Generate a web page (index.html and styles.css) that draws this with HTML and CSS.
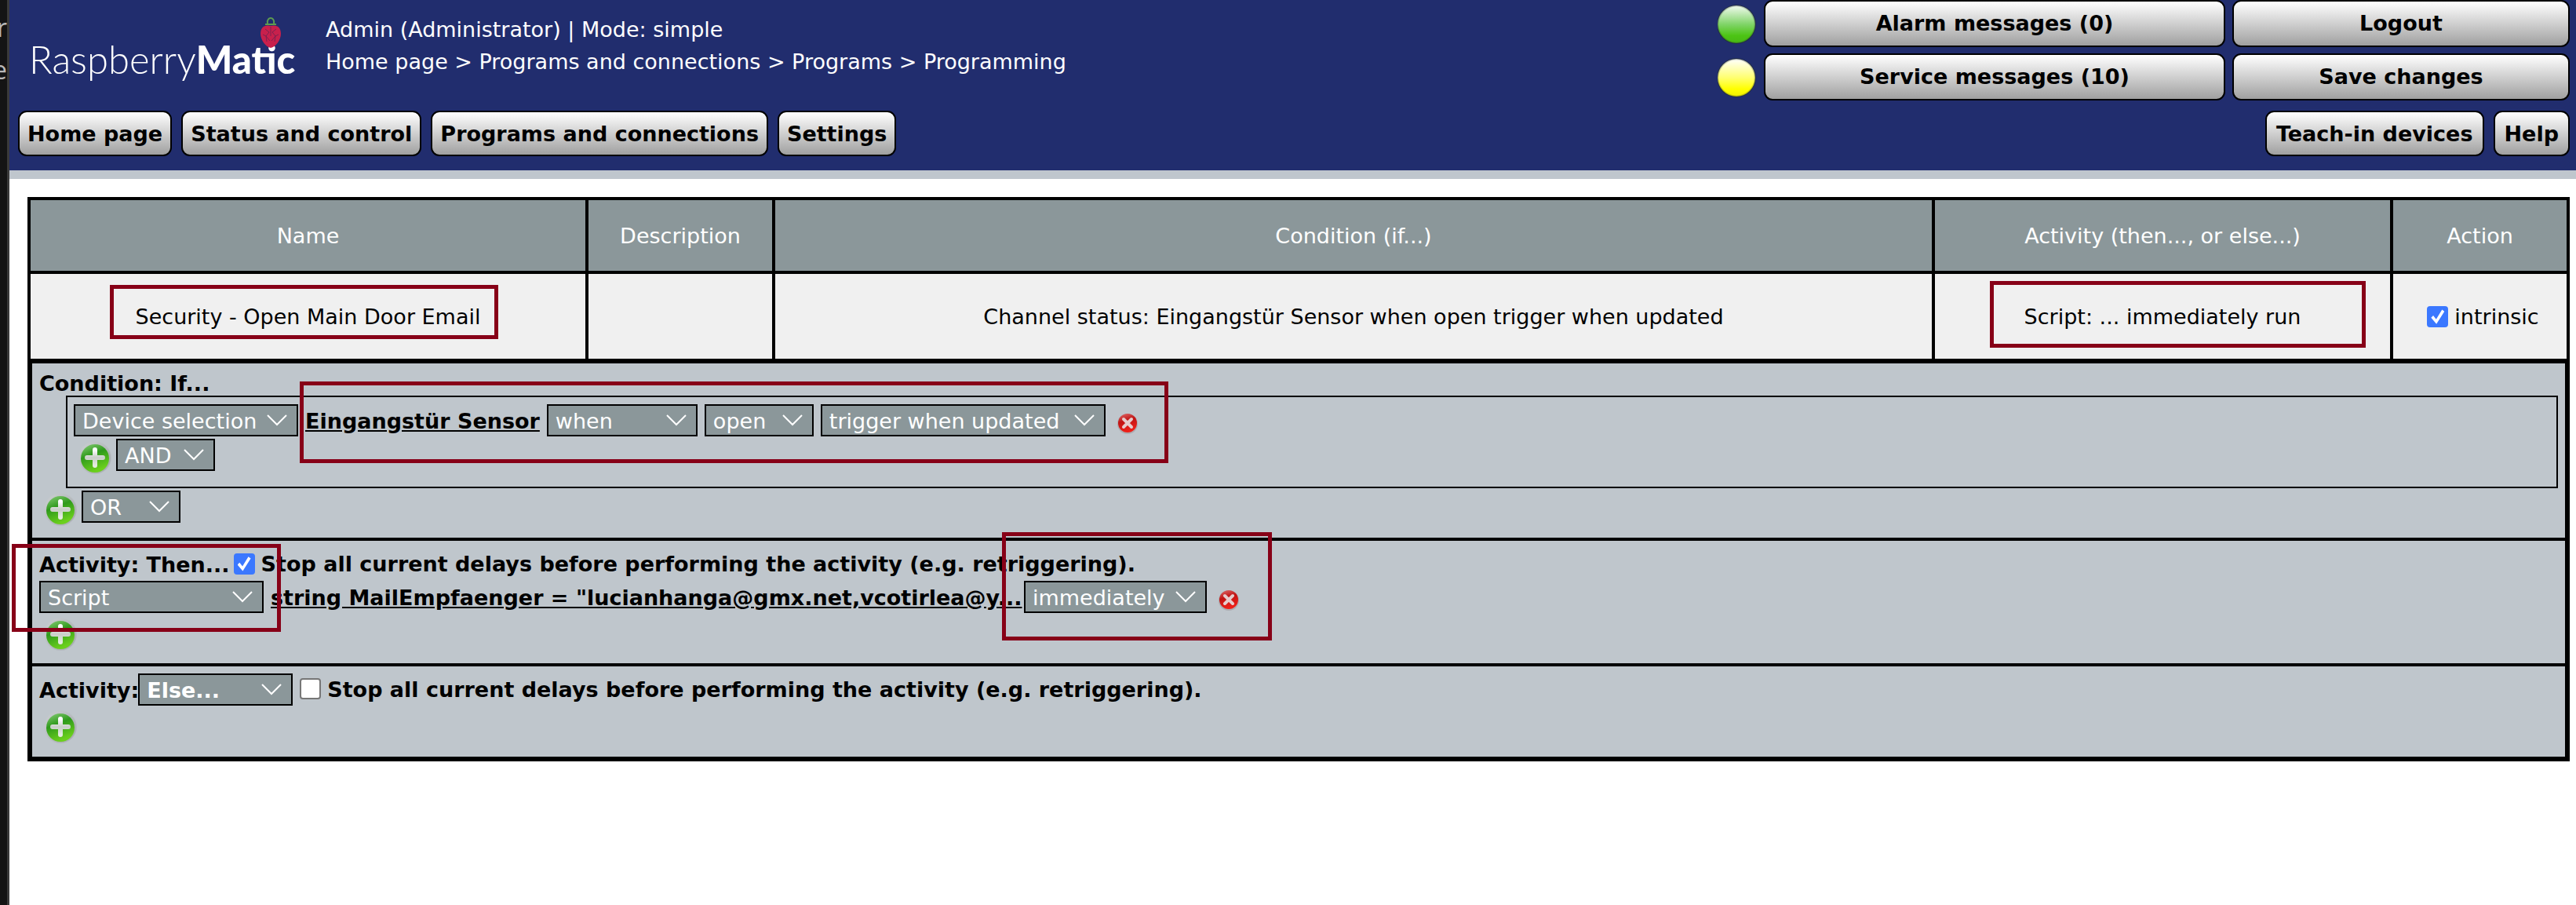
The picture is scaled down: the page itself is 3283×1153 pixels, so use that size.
FILE: index.html
```html
<!DOCTYPE html>
<html lang="en">
<head>
<meta charset="utf-8">
<title>RaspberryMatic</title>
<link rel="stylesheet" href="styles.css">
</head>
<body>
<svg class="defs" aria-hidden="true">
  <defs>
    <linearGradient id="green-fill" x1="0" y1="0" x2="0.4" y2="1"><stop offset="0" stop-color="#8ccf7c"/><stop offset="0.45" stop-color="#2f9a1c"/><stop offset="1" stop-color="#6bd01c"/></linearGradient>
    <linearGradient id="ring-fill" x1="0" y1="0" x2="1" y2="1"><stop offset="0" stop-color="#ccd0d3"/><stop offset="1" stop-color="#a0a5a8"/></linearGradient>
    <linearGradient id="plus-fill" x1="0" y1="0" x2="0" y2="1"><stop offset="0" stop-color="#ffffff"/><stop offset="0.5" stop-color="#c8cec8"/><stop offset="1" stop-color="#e4ece0"/></linearGradient>
    <linearGradient id="red-fill" x1="0" y1="0" x2="0.3" y2="1"><stop offset="0" stop-color="#e07070"/><stop offset="0.45" stop-color="#c01414"/><stop offset="1" stop-color="#ee2018"/></linearGradient>
    <linearGradient id="led-green" x1="0" y1="0" x2="0" y2="1"><stop offset="0" stop-color="#f2faf0"/><stop offset="0.5" stop-color="#80d468"/><stop offset="0.8" stop-color="#4cc414"/><stop offset="1" stop-color="#48b814"/></linearGradient>
    <linearGradient id="led-yellow" x1="0" y1="0" x2="0" y2="1"><stop offset="0" stop-color="#ffffff"/><stop offset="0.5" stop-color="#ffff70"/><stop offset="0.8" stop-color="#ffff00"/><stop offset="1" stop-color="#f0f000"/></linearGradient>
    <radialGradient id="led-shade"><stop offset="0.88" stop-color="#202a20" stop-opacity="0"/><stop offset="1" stop-color="#202a20" stop-opacity="0.6"/></radialGradient>
    <symbol id="add" viewBox="0 0 44 44">
      <circle cx="22" cy="22" r="21" fill="url(#ring-fill)" opacity="0.5"/>
      <circle cx="22" cy="22" r="20" fill="url(#ring-fill)"/>
      <circle cx="22" cy="23" r="18" fill="url(#green-fill)"/>
      <path d="M22 12V32M12 22H32" stroke="url(#plus-fill)" stroke-width="6" stroke-linecap="round"/>
    </symbol>
    <symbol id="remove" viewBox="0 0 32 32">
      <circle cx="16" cy="17" r="13" fill="#8a7a7e" opacity="0.35"/>
      <circle cx="16" cy="16" r="12" fill="url(#red-fill)"/>
      <path d="M11 11L21 21M21 11L11 21" stroke="#e6cccc" stroke-width="4" stroke-linecap="round"/>
    </symbol>
    <symbol id="chevron" viewBox="0 0 26 15"><path d="M1 1L13 13L25 1" fill="none" stroke="#fff" stroke-width="2"/></symbol>
  </defs>
</svg>

<div class="window">
  <aside class="edge" aria-hidden="true"><p>r</p><p>e</p></aside>
  <div class="page">
    <header class="header">
      <div class="top">
        <a class="logo" href="#"><span class="thin">Raspberry</span><b>Matic</b>
          <svg class="berry" viewBox="0 0 28 40"><path d="M7 9H21M10 8C9 3 12 1 14 1S19 3 18 8" fill="none" stroke="#5d9c50" stroke-width="2"/><path d="M14 11C22 9 27 13 27 21C27 29 20 38 14 39C8 38 1 29 1 21C1 13 6 9 14 11Z" fill="#c8204c"/><path d="M7 15L12 19L8 24L13 30M21 15L16 19L20 24L15 30M14 12V24M4 22L8 24L9 31M24 22L20 24L19 31" fill="none" stroke="#7d2050" stroke-width="1"/></svg>
        </a>
        <div class="info">
          <p>Admin (Administrator) | Mode: simple</p>
          <p>Home page &gt; Programs and connections &gt; Programs &gt; Programming</p>
        </div>
        <div class="status">
          <svg class="led" viewBox="0 0 50 52"><circle cx="24" cy="27" r="24" fill="url(#led-green)"/><circle cx="24" cy="27" r="25" fill="url(#led-shade)"/></svg>
          <button class="btn" type="button">Alarm messages (0)</button>
          <button class="btn" type="button">Logout</button>
          <svg class="led" viewBox="0 0 50 52"><circle cx="24" cy="27" r="24" fill="url(#led-yellow)"/><circle cx="24" cy="27" r="25" fill="url(#led-shade)"/></svg>
          <button class="btn" type="button">Service messages (10)</button>
          <button class="btn" type="button">Save changes</button>
        </div>
      </div>
      <nav class="menu">
        <button class="btn" type="button">Home page</button>
        <button class="btn" type="button">Status and control</button>
        <button class="btn" type="button">Programs and connections</button>
        <button class="btn" type="button">Settings</button>
        <span class="spacer"></span>
        <button class="btn" type="button">Teach-in devices</button>
        <button class="btn" type="button">Help</button>
      </nav>
    </header>

    <main class="program">
      <table class="summary">
        <colgroup><col class="c-name"><col class="c-desc"><col><col class="c-act"><col class="c-action"></colgroup>
        <thead><tr><th>Name</th><th>Description</th><th>Condition (if...)</th><th>Activity (then..., or else...)</th><th>Action</th></tr></thead>
        <tbody><tr>
          <td>Security - Open Main Door Email</td><td></td>
          <td>Channel status: Eingangstür Sensor when open trigger when updated</td>
          <td>Script: ... immediately run</td>
          <td><label class="check"><input type="checkbox" checked>intrinsic</label></td>
        </tr></tbody>
      </table>

      <div class="editor">
        <section class="rule condition">
          <h2>Condition: If...</h2>
          <div class="group">
            <div class="line">
              <span class="pick w-wide"><select aria-label="Condition type"><option>Device selection</option></select><svg><use href="#chevron"/></svg></span>
              <a href="#">Eingangstür Sensor</a>
              <span class="pick w-when"><select aria-label="Comparison"><option>when</option></select><svg><use href="#chevron"/></svg></span>
              <span class="pick w-open"><select aria-label="State"><option>open</option></select><svg><use href="#chevron"/></svg></span>
              <span class="pick w-trigger"><select aria-label="Trigger"><option>trigger when updated</option></select><svg><use href="#chevron"/></svg></span>
              <button class="icon remove" type="button" aria-label="Remove"><svg><use href="#remove"/></svg></button>
            </div>
            <div class="line add-line">
              <button class="icon add" type="button" aria-label="Add"><svg><use href="#add"/></svg></button>
              <span class="pick w-op"><select aria-label="Operator"><option>AND</option></select><svg><use href="#chevron"/></svg></span>
            </div>
          </div>
          <div class="line add-line">
            <button class="icon add" type="button" aria-label="Add group"><svg><use href="#add"/></svg></button>
            <span class="pick w-op"><select aria-label="Group operator"><option>OR</option></select><svg><use href="#chevron"/></svg></span>
          </div>
        </section>

        <section class="rule then">
          <div class="line title">
            <h2>Activity: Then...</h2>
            <label class="check"><input type="checkbox" checked>Stop all current delays before performing the activity (e.g. retriggering).</label>
          </div>
          <div class="line">
            <span class="pick w-wide"><select aria-label="Activity type"><option>Script</option></select><svg><use href="#chevron"/></svg></span>
            <a class="script" href="#">string MailEmpfaenger = "lucianhanga@gmx.net,vcotirlea@y...</a>
            <span class="pick w-delay"><select aria-label="Delay"><option>immediately</option></select><svg><use href="#chevron"/></svg></span>
            <button class="icon remove" type="button" aria-label="Remove"><svg><use href="#remove"/></svg></button>
          </div>
          <div class="line add-line"><button class="icon add" type="button" aria-label="Add activity"><svg><use href="#add"/></svg></button></div>
        </section>

        <section class="rule else">
          <div class="line">
            <h2 class="tight">Activity:</h2>
            <span class="pick strong w-else"><select aria-label="Branch"><option>Else...</option></select><svg><use href="#chevron"/></svg></span>
            <label class="check"><input type="checkbox">Stop all current delays before performing the activity (e.g. retriggering).</label>
          </div>
          <div class="line add-line"><button class="icon add" type="button" aria-label="Add activity"><svg><use href="#add"/></svg></button></div>
        </section>
      </div>
    </main>
  </div>
  <div class="mark mark-name"></div>
  <div class="mark mark-sensor"></div>
  <div class="mark mark-script"></div>
  <div class="mark mark-delay"></div>
  <div class="mark mark-run"></div>
</div>
</body>
</html>
```
FILE: styles.css
```css
* { box-sizing: border-box; }
body { margin: 0; background: #fff; color: #000; font: 27px/32px "DejaVu Sans", Verdana, sans-serif; }
h2, p { margin: 0; }
h2 { padding-top: 2px; font-size: 27px; line-height: 30px; }
.defs { position: absolute; width: 0; height: 0; }
.window { position: relative; display: flex; min-height: 100vh; }
.edge { width: 12px; flex: none; overflow: hidden; background: #141414; border-right: 3px solid #3a3a3a; color: #b8b8b8; font: 32px/54px "Open Sans", sans-serif; padding-top: 8px; }
.edge p { display: flex; justify-content: flex-end; }
.page { flex: 1; min-width: 0; }

.header { background: #212d6e; border-bottom: 11px solid #bfc6cd; padding: 0 8px 18px 11px; }
.top { display: flex; align-items: flex-start; }
.logo { position: relative; width: 392px; flex: none; padding: 46px 0 0 14px; color: #fff; text-decoration: none; font: 700 49px/58px Lato, sans-serif; white-space: nowrap; }
.logo .thin { font-weight: 300; }
.berry { position: absolute; left: 308px; top: 22px; width: 28px; height: 40px; }
.info { flex: 1; color: #fff; padding-top: 17px; line-height: 41px; }
.status { display: grid; grid-template-columns: 50px 588px 430px; column-gap: 9px; row-gap: 8px; align-items: center; }
.led { width: 50px; height: 52px; }
.btn { height: 60px; padding: 0 8px; border: 2px solid #000; border-radius: 11px; background: linear-gradient(#fff, #a0a0a0); color: #000; font: bold 27px/32px "DejaVu Sans", Verdana, sans-serif; white-space: nowrap; }
.menu { display: flex; gap: 12px; margin-top: 13px; }
.menu .btn { height: 58px; padding: 2px 10px 0; }
.menu .spacer ~ .btn { padding: 2px 12px 0; }
.spacer { flex: 1; }

.program { margin: 23px 8px 0 23px; border: 4px solid #000; }
.summary { width: 100%; table-layout: fixed; border-spacing: 0; }
.c-name { width: 711px; }
.c-desc { width: 238px; }
.c-act { width: 584px; }
.c-action { width: 221px; }
.summary th, .summary td { padding: 2px 0 0; text-align: center; border: solid #000; border-width: 0 4px 4px 0; }
.summary th:last-child, .summary td:last-child { border-right: 0; }
.summary th { height: 94px; background: #8b979a; color: #fff; font-weight: normal; }
.summary td { height: 112px; background: #f0f0f0; }
.summary .check { padding-left: 8px; }

.check { display: inline-flex; align-items: center; gap: 8px; }
input[type="checkbox"] { appearance: none; width: 27px; height: 27px; margin: 0 0 2px; border: 2px solid #767676; border-radius: 4px; background: #fff; }
input[type="checkbox"]:checked { border: 0; background: #3b78ff; display: grid; place-items: center; }
input[type="checkbox"]:checked::before { content: ""; width: 17px; height: 19px; background: #fff; clip-path: polygon(0 58%, 16% 44%, 38% 68%, 82% 4%, 100% 16%, 40% 100%); }

.editor { border: 2px solid #000; background: #bfc6cc; }
.rule { padding: 9px 9px 0; border-bottom: 4px solid #000; }
.rule:last-child { border-bottom: 0; }
.condition { min-height: 226px; }
.then { min-height: 160px; padding-top: 14px; }
.else { min-height: 115px; }
.group { margin-left: 34px; border: 2px solid #000; padding: 9px 8px 0; height: 118px; }
.line { display: flex; align-items: center; gap: 9px; }
.title { gap: 5px; padding-bottom: 5px; }
.tight { margin-right: -10px; }
.line a, .line label { font-weight: bold; color: #000; white-space: nowrap; }
.line a { padding-top: 2px; }
.script { width: 951px; }
.pick { position: relative; flex: none; height: 41px; }
.pick select { appearance: none; width: 100%; height: 41px; margin: 0; padding: 2px 9px 0; border: 2px solid #000; border-radius: 0; background: #8b979a; color: #fff; font: 27px/32px "DejaVu Sans", Verdana, sans-serif; }
.pick.strong select { font-weight: bold; }
.pick svg { position: absolute; right: 14px; top: 13px; width: 26px; height: 15px; pointer-events: none; }
.w-wide { width: 286px; }
.w-when { width: 192px; }
.w-open { width: 139px; }
.w-trigger { width: 363px; }
.w-delay { width: 233px; }
.w-else { width: 197px; }
.w-op { width: 126px; }
.icon { flex: none; padding: 0; border: 0; background: none; }
.icon svg { display: block; width: 100%; height: 100%; }
.add { width: 44px; height: 44px; margin: 2px 0 0; }
.remove { width: 32px; height: 32px; margin: 6px 0 0 3px; }
.add-line { padding: 3px 0 0 5px; gap: 5px; align-items: flex-start; }

.mark { position: absolute; border: 5px solid #870017; pointer-events: none; }
.mark-name { left: 140px; top: 363px; width: 495px; height: 69px; }
.mark-sensor { left: 382px; top: 486px; width: 1107px; height: 104px; }
.mark-script { left: 15px; top: 693px; width: 343px; height: 112px; }
.mark-delay { left: 1277px; top: 678px; width: 344px; height: 138px; }
.mark-run { right: 268px; top: 358px; width: 479px; height: 85px; }
```
